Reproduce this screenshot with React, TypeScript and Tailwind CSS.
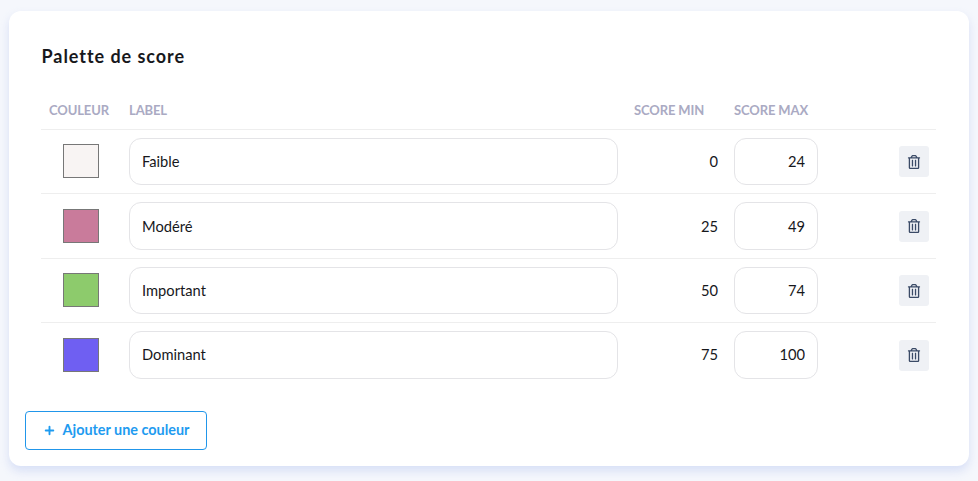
import { Plus } from 'lucide-react';
import { FaRegTrashAlt } from 'react-icons/fa';

const rows = [
  { color: 'bg-[#f8f4f3]', label: 'Faible', min: 0, max: 24 },
  { color: 'bg-[#c97b9b]', label: 'Modéré', min: 25, max: 49 },
  { color: 'bg-[#8dcb6c]', label: 'Important', min: 50, max: 74 },
  { color: 'bg-[#6f5ff2]', label: 'Dominant', min: 75, max: 100 },
];

export default function App() {
  return (
    <div className="min-h-[481px] bg-[#f5f7fc] pt-[11px] px-[9px] font-['Lato',sans-serif]">
      <div className="h-[455px] w-[960px] rounded-xl bg-white pt-[33px] shadow-[0_5px_10px_rgba(180,195,240,0.45)]">
        <h2 className="ml-[32.5px] text-[18px] leading-6 font-bold tracking-[0.95px] text-[#17181c]">Palette de score</h2>

        {/* Table */}
        <div className="mt-[25px] ml-8 w-[895px]">
          <div className="grid h-[37px] grid-cols-[80px_505px_100px_100px_110px] items-center border-b border-[#eeeeee] text-[13px] font-bold tracking-[-0.12px] text-[#aaaac3]">
            <div className="pl-2">COULEUR</div>
            <div className="pl-2">LABEL</div>
            <div className="pl-2">SCORE MIN</div>
            <div className="pl-2">SCORE MAX</div>
            <div />
          </div>

          {rows.map((row, i) => (
            <div
              key={row.label}
              className={`grid h-[64.4px] grid-cols-[80px_505px_100px_100px_110px] items-center border-b text-[14.7px] text-[#17181c] ${
                i < rows.length - 1 ? 'border-[#eeeeee]' : 'border-transparent'
              }`}
            >
              <div className="flex justify-center pb-[0.6px]">
                <div className={`h-[34px] w-9 border border-[#777777] ${row.color}`} />
              </div>
              <div className="px-2">
                <input
                  defaultValue={row.label}
                  className="h-[47.4px] w-full rounded-xl border border-[#e4e4e7] bg-white px-3 pb-px outline-none"
                />
              </div>
              <div className="px-2 pb-px text-right">{row.min}</div>
              <div className="px-2">
                <input
                  defaultValue={row.max}
                  className="h-[47.4px] w-full rounded-xl border border-[#e4e4e7] bg-white px-3 pb-px text-right outline-none"
                />
              </div>
              <div className="flex justify-end pt-[0.4px] pr-[7px]">
                <button className="flex h-[31px] w-[30px] items-center justify-center rounded-[3px] bg-[#eff1f5] text-[#3a4a66]">
                  <FaRegTrashAlt size={14} />
                </button>
              </div>
            </div>
          ))}
        </div>

        <button className="mt-[23px] ml-4 flex h-[39px] w-[182px] items-center justify-center gap-[7px] rounded-[4px] border border-[#2196ea] bg-white text-[14.4px] font-bold text-[#1e9bf0]">
          <Plus size={13} strokeWidth={3.5} />
          Ajouter une couleur
        </button>
      </div>
    </div>
  );
}
